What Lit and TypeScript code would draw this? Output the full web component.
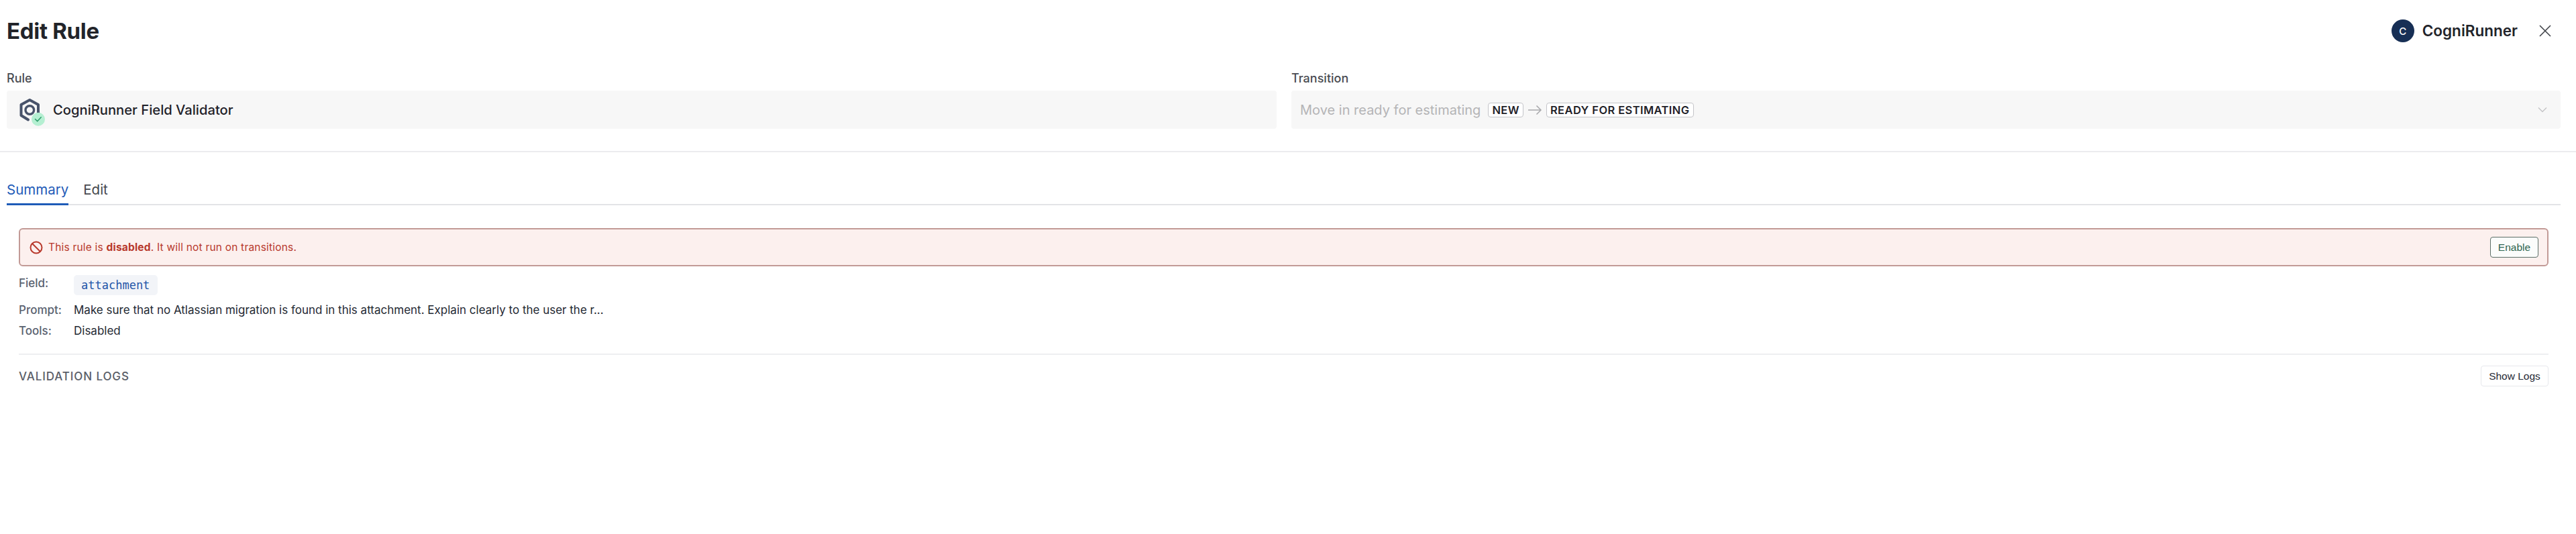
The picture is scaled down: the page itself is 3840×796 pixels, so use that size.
import { LitElement, html, css } from "lit";
import { customElement } from "lit/decorators.js";

@customElement("app-root")
export class AppRoot extends LitElement {
  static styles = css`
    :host { display: block; width: 3840px; height: 796px; background: #fff; overflow: hidden; font-family: Inter, "Noto Sans", sans-serif; color: #1f2229; }
    .header { height: 92px; display: flex; align-items: center; justify-content: space-between; padding: 0 37px 0 10px; box-sizing: border-box; }
    h1 { margin: 0; font-size: 33px; font-weight: 700; line-height: 40px; color: #22242a; letter-spacing: -0.3px; }
    .who { display: flex; align-items: center; }
    .avatar { width: 34px; height: 34px; border-radius: 50%; background: #172f55; color: #fff; font-size: 15px; font-weight: 500; display: flex; align-items: center; justify-content: center; margin-right: 12px; }
    .name { font-size: 22.500px; font-weight: 600; line-height: 30px; color: #22242a; margin-right: 32px; }
    .close { display: block; width: 18px; height: 18px; }
    .form { display: grid; grid-template-columns: 1893px 1892px; column-gap: 22px; padding: 14px 23px 33px 10px; border-bottom: 2px solid #ececee; }
    .label { font-size: 18px; font-weight: 500; line-height: 22px; color: #4a4c52; margin-bottom: 7px; }
    .box { height: 57px; background: #f7f7f7; border-radius: 4px; display: flex; align-items: center; padding: 0 13px; box-sizing: border-box; }
    .logo { width: 46px; height: 46px; margin: 0 8px 0 2px; flex: none; overflow: visible; }
    .rule-name { font-size: 20.200px; font-weight: 500; color: #1f2229; }
    .placeholder { font-size: 20px; color: #b4b4b6; margin-right: 11px; }
    .badge { font-size: 16.500px; letter-spacing: 0.4px; font-weight: 600; line-height: 20px; color: #1f2229; background: #fff; border: 1px solid #c4c5c9; border-radius: 4px; padding: 0 5px; }
    .arrow { width: 22px; height: 16px; margin: 0 6px 0 6px; flex: none; }
    .chev { width: 14px; height: 9px; margin-left: auto; margin-right: 7px; flex: none; }
    .tabs-wrap { padding: 38px 23px 0 10px; }
    .tabs { display: flex; gap: 22px; border-bottom: 2px solid #e3e4e7; height: 39px; }
    .tab { font-size: 20.500px; line-height: 36px; color: #46484e; height: 41px; box-sizing: border-box; }
    .tab.active { color: #1f5cb8; border-bottom: 3px solid #1f5cb8; }
    .content { padding: 34px 41px 0 28px; }
    .alert { height: 57px; box-sizing: border-box; border: 2px solid #c29a96; border-radius: 6px; background: #fcf0ee; display: flex; align-items: center; padding: 0 13px 0 14px; color: #b8392c; font-size: 15.500px; letter-spacing: 0.2px; }
    .alert svg { width: 20px; height: 20px; margin-right: 8px; flex: none; }
    .alert b { font-weight: 700; }
    .enable { margin-left: auto; height: 31px; width: 72px; box-sizing: border-box; border: 1px solid #5c6f68; border-radius: 4px; background: #fbfcfb; color: #2f6650; font: 400 15.500px "Liberation Sans", sans-serif; padding: 0; }
    .rows { padding-top: 13px; }
    .row { display: flex; align-items: center; font-size: 17px; color: #1f2933; line-height: 31px; }
    .row .k { width: 82px; flex: none; color: #5a6270; font-weight: 500; }
    .chip { font: 400 17px "DejaVu Sans Mono", monospace; color: #1f55a8; background: #f2f4f8; border-radius: 5px; height: 30px; line-height: 30px; padding: 0 12px 0 11px; }
    .row.field { height: 37px; align-items: flex-start; line-height: 25px; }
    .logs { margin-top: 18px; border-top: 2px solid #eeeff1; padding-top: 16px; display: flex; align-items: center; justify-content: space-between; }
    .logs span { font-size: 17px; font-weight: 500; letter-spacing: 0.9px; color: #5a5e68; }
    .show { width: 101px; height: 31px; box-sizing: border-box; border: 1px solid #e7e8ec; border-radius: 4px; background: #fff; color: #262a35; font: 400 15.500px "Liberation Sans", sans-serif; padding: 0; }
  `;

  render() {
    return html`
      <div class="header">
        <h1>Edit Rule</h1>
        <div class="who">
          <div class="avatar">C</div>
          <div class="name">CogniRunner</div>
          <svg class="close" viewBox="0 0 18 18" fill="none" stroke="#3f4248" stroke-width="1.6"><path d="M1 1l16 16M17 1L1 17"/></svg>
        </div>
      </div>
      <div class="form">
        <div>
          <div class="label">Rule</div>
          <div class="box">
            <svg class="logo" viewBox="0 0 46 46" fill="none">
              <path d="M17 37.500 L6.500 31 V15 L19.300 8 L32 15 V28" stroke="#48536a" stroke-width="4" stroke-linejoin="round" stroke-linecap="round"/>
              <circle cx="19.300" cy="23" r="6.300" stroke="#48536a" stroke-width="3.400"/>
              <circle cx="32" cy="36.700" r="10" fill="#b5efd2"/>
              <path d="M27.500 36.500l3.200 3.300 5.500-6" stroke="#2f9e6c" stroke-width="1.600" stroke-linecap="round" stroke-linejoin="round"/>
            </svg>
            <span class="rule-name">CogniRunner Field Validator</span>
          </div>
        </div>
        <div>
          <div class="label">Transition</div>
          <div class="box">
            <span class="placeholder">Move in ready for estimating</span>
            <span class="badge">NEW</span>
            <svg class="arrow" viewBox="0 0 22 16" fill="none" stroke="#a9a9ac" stroke-width="1.500"><path d="M1 8h19M13.500 1.500L20 8l-6.500 6.500"/></svg>
            <span class="badge">READY FOR ESTIMATING</span>
            <svg class="chev" viewBox="0 0 14 9" fill="none" stroke="#c4c4c6" stroke-width="1.400"><path d="M1 1.500l6 6 6-6"/></svg>
          </div>
        </div>
      </div>
      <div class="tabs-wrap">
        <div class="tabs">
          <div class="tab active">Summary</div>
          <div class="tab">Edit</div>
        </div>
      </div>
      <div class="content">
        <div class="alert">
          <svg viewBox="0 0 20 20" fill="none" stroke="#b8392c" stroke-width="2"><circle cx="10" cy="10" r="8.500"/><path d="M4 4l12 12"/></svg>
          <span>This rule is <b>disabled</b>. It will not run on transitions.</span>
          <button class="enable">Enable</button>
        </div>
        <div class="rows">
          <div class="row field"><span class="k">Field:</span><span class="chip">attachment</span></div>
          <div class="row"><span class="k">Prompt:</span><span>Make sure that no Atlassian migration is found in this attachment. Explain clearly to the user the r...</span></div>
          <div class="row"><span class="k">Tools:</span><span>Disabled</span></div>
        </div>
        <div class="logs">
          <span>VALIDATION LOGS</span>
          <button class="show">Show Logs</button>
        </div>
      </div>
    `;
  }
}
